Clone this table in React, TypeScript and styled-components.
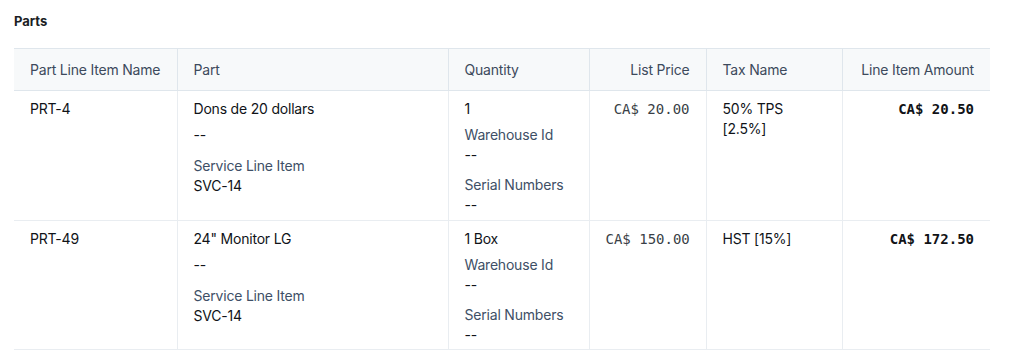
import React from "react";
import styled, { createGlobalStyle } from "styled-components";

const Global = createGlobalStyle`
  html, body { margin: 0; padding: 0; background: #ffffff; }
  body { font-family: Inter, "Noto Sans", sans-serif; }
`;

const Page = styled.div`
  padding: 11px 42px 12px 14px;
`;

const Title = styled.h2`
  margin: 0 0 17px;
  font-size: 13px;
  line-height: 20px;
  font-weight: 700;
  color: #1b1e24;
`;

const Table = styled.table`
  width: 976px;
  border-collapse: collapse;
  table-layout: fixed;
  font-size: 14px;
  letter-spacing: -0.2px;
  color: #101318;
`;

const Head = styled.th<{ $right?: boolean }>`
  height: 41px;
  padding: 0 16px;
  background: #f7f9fa;
  border: 1px solid #dfe6ec;
  text-align: ${(p) => (p.$right ? "right" : "left")};
  font-weight: 400;
  color: #3d4a5c;
  white-space: nowrap;
  &:first-child { border-left: none; }
  &:last-child { border-right: none; }
`;

const Cell = styled.td<{ $right?: boolean }>`
  vertical-align: top;
  padding: 8px 16px 4.5px;
  line-height: 20px;
  border-left: 1px solid #e9edf1;
  border-bottom: 1px solid #e9edf1;
  text-align: ${(p) => (p.$right ? "right" : "left")};
  &:first-child { border-left: none; }
`;

const Mono = styled.span<{ $bold?: boolean }>`
  font-family: "DejaVu Sans Mono", "Liberation Mono", monospace;
  font-size: 14px;
  letter-spacing: 0;
  white-space: nowrap;
  font-weight: ${(p) => (p.$bold ? 700 : 400)};
  color: ${(p) => (p.$bold ? "#111317" : "#3a3f47")};
`;

const Line = styled.div``;

const Field = styled.div<{ $gap: number }>`
  margin-top: ${(p) => p.$gap}px;
`;

const Label = styled.div`
  color: #3e4f66;
`;

type Row = {
  name: string;
  part: string;
  qty: string;
  price: string;
  tax: string[];
  amount: string;
};

const rows: Row[] = [
  { name: "PRT-4", part: "Dons de 20 dollars", qty: "1", price: "CA$ 20.00", tax: ["50% TPS", "[2.5%]"], amount: "CA$ 20.50" },
  { name: "PRT-49", part: "24\" Monitor LG", qty: "1 Box", price: "CA$ 150.00", tax: ["HST [15%]"], amount: "CA$ 172.50" },
];

export default function App() {
  return (
    <Page>
      <Global />
      <Title>Parts</Title>
      <Table>
        <colgroup>
          <col style={{ width: 163 }} />
          <col style={{ width: 271 }} />
          <col style={{ width: 141 }} />
          <col style={{ width: 117 }} />
          <col style={{ width: 136 }} />
          <col style={{ width: 148 }} />
        </colgroup>
        <thead>
          <tr>
            <Head>Part Line Item Name</Head>
            <Head>Part</Head>
            <Head>Quantity</Head>
            <Head $right>List Price</Head>
            <Head>Tax Name</Head>
            <Head $right>Line Item Amount</Head>
          </tr>
        </thead>
        <tbody>
          {rows.map((r) => (
            <tr key={r.name}>
              <Cell>{r.name}</Cell>
              <Cell>
                <Line>{r.part}</Line>
                <Field $gap={6}>--</Field>
                <Field $gap={11}>
                  <Label>Service Line Item</Label>
                  <Line>SVC-14</Line>
                </Field>
              </Cell>
              <Cell>
                <Line>{r.qty}</Line>
                <Field $gap={6}>
                  <Label>Warehouse Id</Label>
                  <Line>--</Line>
                </Field>
                <Field $gap={10}>
                  <Label>Serial Numbers</Label>
                  <Line>--</Line>
                </Field>
              </Cell>
              <Cell $right>
                <Mono>{r.price}</Mono>
              </Cell>
              <Cell>
                {r.tax.map((t) => (
                  <Line key={t}>{t}</Line>
                ))}
              </Cell>
              <Cell $right>
                <Mono $bold>{r.amount}</Mono>
              </Cell>
            </tr>
          ))}
        </tbody>
      </Table>
    </Page>
  );
}
